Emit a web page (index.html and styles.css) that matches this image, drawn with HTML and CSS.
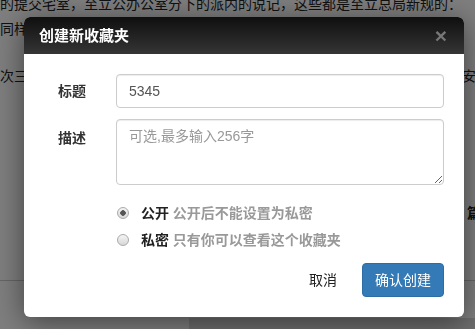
FILE: index.html
```html
<!DOCTYPE html>
<html lang="zh-CN">
<head>
    <meta charset="UTF-8">
    <meta name="viewport" content="width=device-width, initial-scale=1.0">
    <title>创建新收藏夹</title>
    <link rel="stylesheet" href="styles.css">
</head>
<body>
    <div class="page">
        <p class="line first">的提交宅室，至立公办公室分下的派内的说记，这些都是至立总局新规的：</p>
        <p class="line second">同样是在这一段时间里，我们也看到了很多新的变化和新的问题出现了</p>
        <p class="line gap"><span>次三条，大家可以按照这个顺序去慢慢地看</span><span>安</span></p>
        <p class="line right">篇</p>
        <div class="foot">
            <div class="foot-side"></div>
            <div class="foot-main"></div>
        </div>
    </div>

    <div class="backdrop"></div>

    <div class="modal">
        <div class="modal-header">
            <h4>创建新收藏夹</h4>
            <span class="close">&times;</span>
        </div>
        <form class="modal-body">
            <div class="row">
                <label class="row-label" for="title">标题</label>
                <input type="text" id="title" class="field" value="5345">
            </div>
            <div class="row top">
                <label class="row-label" for="desc">描述</label>
                <textarea id="desc" class="field area" placeholder="可选,最多输入256字"></textarea>
            </div>
            <div class="radios">
                <label class="radio"><input type="radio" name="vis" checked> 公开 <span class="hint">公开后不能设置为私密</span></label>
                <label class="radio"><input type="radio" name="vis"> 私密 <span class="hint">只有你可以查看这个收藏夹</span></label>
            </div>
            <div class="actions">
                <button type="button" class="btn btn-link">取消</button>
                <button type="button" class="btn btn-primary">确认创建</button>
            </div>
        </form>
    </div>
</body>
</html>
```

FILE: styles.css
```css
* {
    box-sizing: border-box;
    margin: 0;
    padding: 0;
}

body {
    font-family: "Liberation Sans", "Noto Sans CJK SC", sans-serif;
    font-size: 14px;
    line-height: 20px;
    color: #333;
    background: #fff;
    overflow: hidden;
    height: 329px;
}

.page {
    height: 329px;
}

.line {
    font-size: 14px;
    white-space: nowrap;
    overflow: hidden;
    color: #222;
    height: 21px;
    line-height: 21px;
}

.first {
    margin-top: -6px;
}

.second {
    margin-top: 4px;
}

.gap {
    margin-top: 26px;
    display: flex;
    justify-content: space-between;
    margin-right: -1px;
}

.right {
    margin-top: 116px;
    text-align: right;
    margin-right: -6px;
    font-weight: bold;
}

.foot {
    margin-top: 56px;
    border-top: 1px solid #ccc;
    display: flex;
    height: 60px;
}

.foot-side {
    width: 189px;
}

.foot-main {
    flex: 1;
    margin-top: 37px;
    background: #ddd;
}

.backdrop {
    position: fixed;
    inset: 0;
    background: rgba(0, 0, 0, 0.5);
}

.modal {
    position: absolute;
    left: 24px;
    top: 17px;
    width: 440px;
    background: #fff;
    border-radius: 6px;
    box-shadow: 0 5px 30px rgba(0, 0, 0, 0.5);
}

.modal-header {
    display: flex;
    align-items: center;
    justify-content: space-between;
    height: 37px;
    padding: 0 17px 0 15px;
    background: linear-gradient(#0f0f0f, #353535);
    border-radius: 6px 6px 0 0;
}

.modal-header h4 {
    color: #fff;
    font-size: 15px;
    font-weight: bold;
}

.close {
    color: #777;
    font-size: 21px;
    font-weight: bold;
    line-height: 20px;
}

.modal-body {
    padding: 20px 20px 20px 34px;
}

.row {
    display: flex;
    align-items: center;
    margin-bottom: 11px;
}

.row.top {
    align-items: flex-start;
}

.row-label {
    width: 58px;
    font-weight: bold;
    color: #333;
}

.row.top .row-label {
    padding-top: 9px;
}

.field {
    flex: 1;
    height: 34px;
    padding: 6px 12px;
    border: 1px solid #ccc;
    border-radius: 4px;
    font: inherit;
    color: #555;
    box-shadow: inset 0 1px 1px rgba(0, 0, 0, 0.075);
}

.area {
    height: 66px;
}

.field::placeholder {
    color: #999;
}

.radios {
    margin-left: 58px;
    padding-top: 3px;
}

.radio {
    display: flex;
    align-items: center;
    height: 27px;
    font-weight: bold;
    color: #222;
    white-space: pre;
}

.radio input {
    appearance: none;
    width: 12px;
    height: 12px;
    margin: 0 8px 0 1px;
    border: 1px solid #aaa;
    border-radius: 50%;
    background: linear-gradient(#f4f4f4, #d8d8d8);
}

.radio input:checked {
    background: radial-gradient(circle, #555 0 2.5px, transparent 3px), linear-gradient(#f4f4f4, #d8d8d8);
}

.hint {
    color: #999;
}

.actions {
    display: flex;
    justify-content: flex-end;
    align-items: center;
    margin-top: 10px;
}

.btn {
    font: inherit;
    height: 34px;
    padding: 6px 12px;
    border: 1px solid transparent;
    border-radius: 4px;
    background: none;
    cursor: pointer;
}

.btn-link {
    color: #222;
    margin-right: 12px;
}

.btn-primary {
    background: #337ab7;
    border-color: #2e6da4;
    color: #fff;
}
```
